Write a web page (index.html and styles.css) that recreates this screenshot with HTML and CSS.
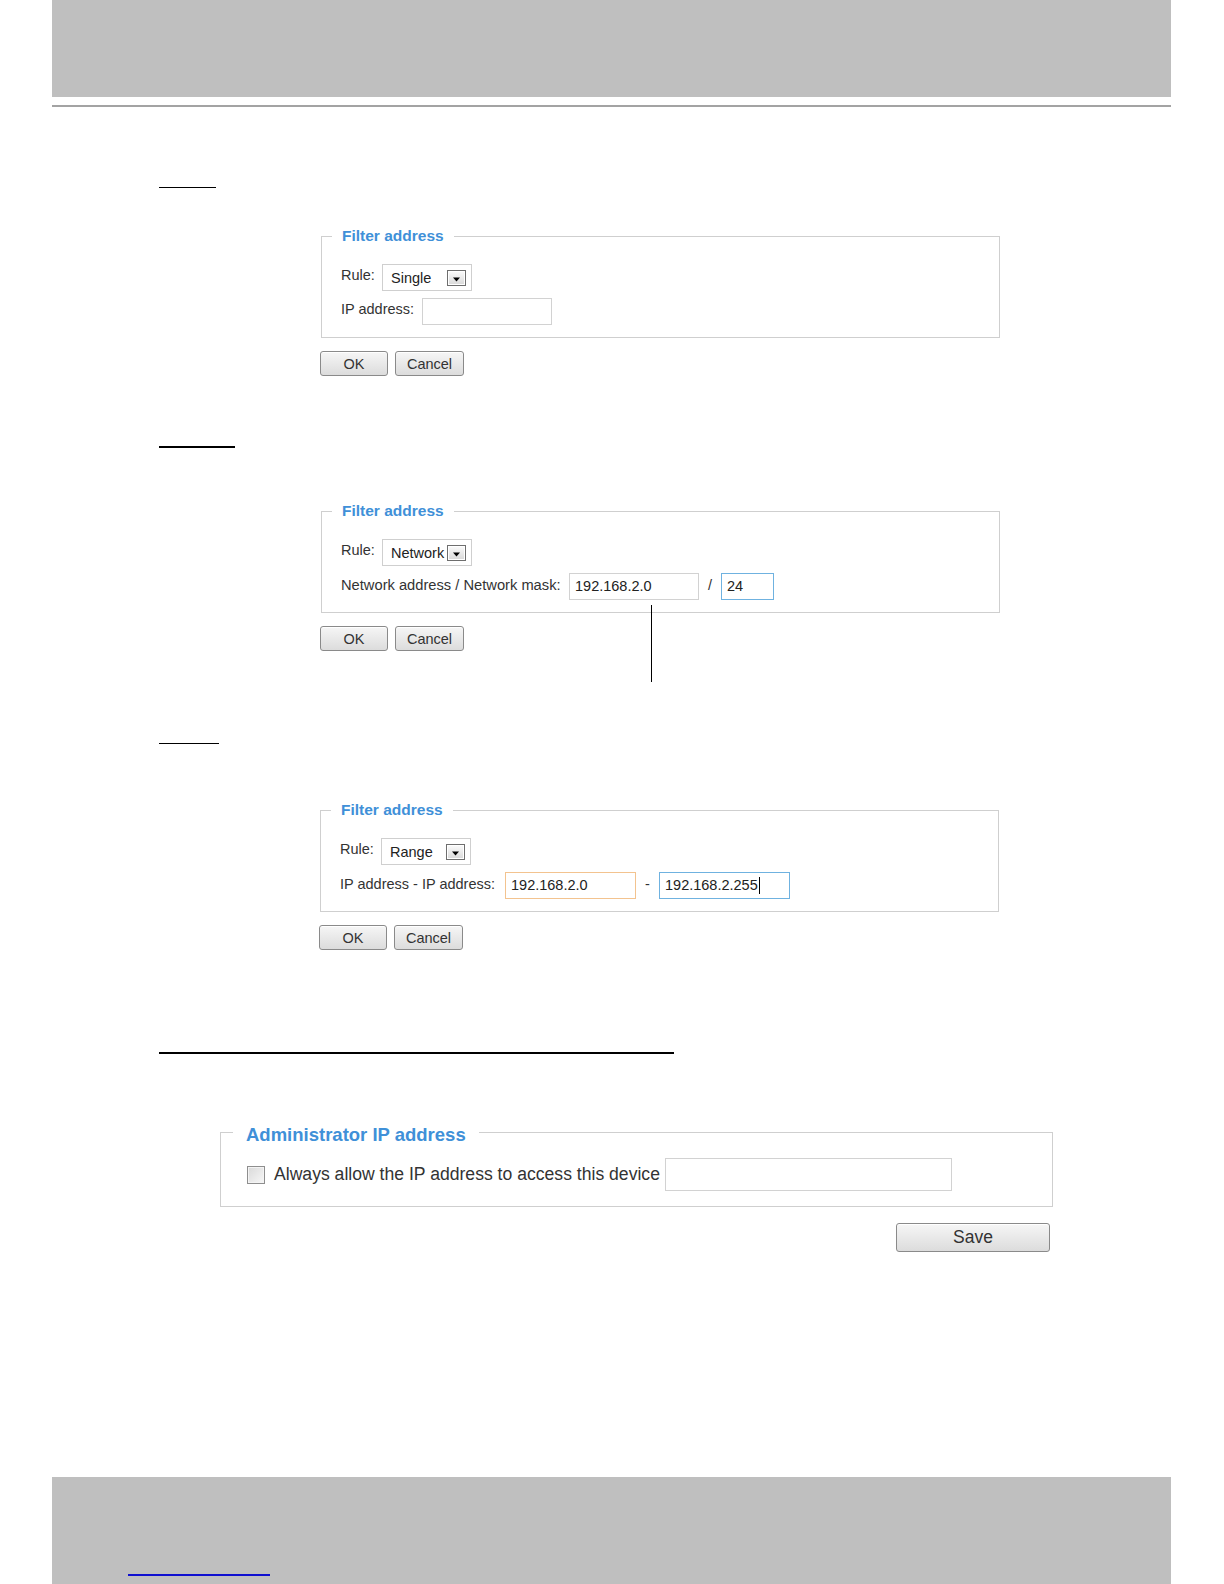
FILE: index.html
```html
<!DOCTYPE html>
<html lang="en">
<head>
<meta charset="utf-8">
<title>Filter address</title>
<link rel="stylesheet" href="styles.css">
</head>
<body>
<div class="page">
  <header class="top-band"></header>
  <div class="top-rule"></div>

  <main class="content">
    <div class="mark thin mark-1"></div>
    <div class="panel panel-1">
      <fieldset class="filter">
        <legend>Filter address</legend>
        <div class="row">
          <span class="label rule-label">Rule:</span>
          <div class="select"><span class="select-text">Single</span><span class="drop"><svg width="9" height="5" viewBox="0 0 9 5"><path d="M1 0.5h7L4.5 4.5z" fill="#000"/></svg></span></div>
        </div>
        <div class="row">
          <span class="label lw-ip">IP address:</span>
          <div class="field w130"></div>
        </div>
      </fieldset>
      <div class="actions">
        <button class="btn btn-ok" type="button">OK</button>
        <button class="btn btn-cancel" type="button">Cancel</button>
      </div>
    </div>

    <div class="mark mark-2"></div>
    <div class="panel panel-2">
      <fieldset class="filter">
        <legend>Filter address</legend>
        <div class="row">
          <span class="label rule-label">Rule:</span>
          <div class="select"><span class="select-text">Network</span><span class="drop"><svg width="9" height="5" viewBox="0 0 9 5"><path d="M1 0.5h7L4.5 4.5z" fill="#000"/></svg></span></div>
        </div>
        <div class="row">
          <span class="label lw-net">Network address / Network mask:</span>
          <div class="field w130">192.168.2.0</div>
          <span class="sep sep-slash">/</span>
          <div class="field w53 focus-blue">24</div>
        </div>
      </fieldset>
      <div class="actions">
        <button class="btn btn-ok" type="button">OK</button>
        <button class="btn btn-cancel" type="button">Cancel</button>
      </div>
      <div class="pointer-line"></div>
    </div>

    <div class="mark thin mark-3"></div>
    <div class="panel panel-3">
      <fieldset class="filter">
        <legend>Filter address</legend>
        <div class="row">
          <span class="label rule-label">Rule:</span>
          <div class="select"><span class="select-text">Range</span><span class="drop"><svg width="9" height="5" viewBox="0 0 9 5"><path d="M1 0.5h7L4.5 4.5z" fill="#000"/></svg></span></div>
        </div>
        <div class="row">
          <span class="label lw-range">IP address - IP address:</span>
          <div class="field w131 focus-orange">192.168.2.0</div>
          <span class="sep sep-dash">-</span>
          <div class="field w131 focus-blue">192.168.2.255<span class="caret"></span></div>
        </div>
      </fieldset>
      <div class="actions">
        <button class="btn btn-ok" type="button">OK</button>
        <button class="btn btn-cancel" type="button">Cancel</button>
      </div>
    </div>

    <div class="mark mark-4"></div>
    <div class="admin-block">
      <fieldset class="admin">
        <legend>Administrator IP address</legend>
        <div class="admin-row">
          <span class="checkbox"></span>
          <span class="admin-text">Always allow the IP address to access this device</span>
          <div class="field admin-field"></div>
        </div>
      </fieldset>
      <div class="save-row">
        <button class="btn btn-save" type="button">Save</button>
      </div>
    </div>
  </main>

  <footer class="bottom-band">
    <span class="footer-link"></span>
  </footer>
</div>
</body>
</html>
```

FILE: styles.css
```css
* {
  box-sizing: border-box;
}

html,
body {
  margin: 0;
  padding: 0;
  background: #ffffff;
}

body {
  font-family: "Liberation Sans", Arial, Helvetica, sans-serif;
  color: #333333;
}

.page {
  width: 1224px;
  min-height: 1584px;
  display: flex;
  flex-direction: column;
}

/* header band */
.top-band {
  margin-left: 52px;
  width: 1119px;
  height: 97px;
  background: #bfbfbf;
}

.top-rule {
  margin: 8px 0 0 52px;
  width: 1119px;
  height: 2px;
  background: #a3a3a3;
}

/* content */
.content {
  padding-left: 159px;
  display: flex;
  flex-direction: column;
  align-items: flex-start;
}

.mark {
  height: 2px;
  background: #000000;
}

.mark.thin {
  height: 1px;
}

.mark-1 {
  width: 57px;
  margin-top: 80px;
}

.mark-2 {
  width: 76px;
  margin-top: 70px;
}

.mark-3 {
  width: 60px;
  margin-top: 92px;
}

.mark-4 {
  width: 515px;
  margin-top: 102px;
}

.panel {
  position: relative;
  margin-left: 162px;
  width: 679px;
}

.panel-1 {
  margin-top: 39px;
}

.panel-2 {
  margin-top: 54px;
}

.panel-3 {
  margin-top: 57px;
  margin-left: 161px;
}

/* fieldset */
.filter {
  margin: 0;
  min-width: 0;
  border: 1px solid #cfcfcf;
  padding: 19px 10px 12px 10px;
  display: flex;
  flex-direction: column;
  gap: 7px;
}

.filter legend {
  padding: 0 10px;
  font-size: 15.5px;
  line-height: 18px;
  font-weight: bold;
  color: #4090d8;
}

.row {
  display: flex;
  align-items: center;
  height: 27px;
  margin-left: 9px;
}

.label {
  font-size: 14.5px;
  line-height: 16px;
  color: #333333;
  white-space: nowrap;
  flex: none;
  margin-bottom: 4px;
}

.rule-label {
  width: 41px;
  margin-bottom: 6px;
}

.lw-ip {
  width: 81px;
  margin-bottom: 5px;
}

.lw-net {
  width: 228px;
  font-size: 14.7px;
}

.lw-range {
  width: 165px;
  margin-bottom: 3px;
}

/* select */
.select {
  width: 90px;
  height: 27px;
  border: 1px solid #cfcfcf;
  background: #ffffff;
  display: flex;
  justify-content: space-between;
  align-items: flex-start;
  padding-left: 8px;
}

.select-text {
  margin-top: 5px;
  font-size: 14.5px;
  line-height: 16px;
  color: #222222;
  white-space: nowrap;
}

.drop {
  flex: none;
  margin-top: 5px;
  margin-right: 5px;
  width: 19px;
  height: 16px;
  border: 1px solid #6e6e6e;
  background: linear-gradient(#fbfbfb, #d8d8d8);
  box-shadow: inset 0 0 0 1px #ffffff;
  display: flex;
  align-items: flex-end;
  justify-content: center;
  padding-bottom: 3px;
}

.drop svg {
  display: block;
}

/* text fields */
.field {
  height: 27px;
  border: 1px solid #d2d2d2;
  background: #ffffff;
  padding-left: 5px;
  font-size: 14.5px;
  line-height: 25px;
  color: #222222;
  white-space: nowrap;
  display: flex;
  align-items: center;
}

.w130 {
  width: 130px;
}

.w131 {
  width: 131px;
}

.w53 {
  width: 53px;
}

.focus-blue {
  border-color: #6fb2e0;
}

.focus-orange {
  border-color: #f3c38f;
}

.sep {
  font-size: 14.5px;
  line-height: 16px;
  color: #333333;
  text-align: center;
  flex: none;
  margin-bottom: 4px;
}

.sep-slash {
  width: 22px;
}

.sep-dash {
  width: 23px;
}

.caret {
  display: inline-block;
  width: 1px;
  height: 17px;
  background: #000000;
  margin-left: 1px;
}

/* buttons */
.actions {
  display: flex;
  gap: 7px;
  margin-top: 13px;
  margin-left: -1px;
}

.btn {
  font-family: "Liberation Sans", Arial, Helvetica, sans-serif;
  font-size: 14.5px;
  color: #333333;
  height: 25px;
  padding: 0;
  border: 1px solid #8a8a8a;
  border-radius: 3px;
  background: linear-gradient(#f6f6f6, #dcdcdc);
  box-shadow: inset 0 1px 0 #ffffff;
  cursor: default;
}

.btn-ok {
  width: 68px;
}

.btn-cancel {
  width: 69px;
}

.pointer-line {
  position: absolute;
  left: 330px;
  top: 103px;
  width: 1px;
  height: 77px;
  background: #000000;
}

/* admin block */
.admin-block {
  margin-top: 64px;
  margin-left: 61px;
  width: 833px;
}

.admin {
  margin: 0;
  min-width: 0;
  border: 1px solid #cfcfcf;
  padding: 12px 12px 15px 12px;
}

.admin legend {
  padding: 6px 13px 0 13px;
  font-size: 18.5px;
  line-height: 22px;
  font-weight: bold;
  color: #4090d8;
}

.admin-row {
  display: flex;
  align-items: center;
  height: 33px;
  margin-left: 14px;
}

.checkbox {
  flex: none;
  width: 18px;
  height: 18px;
  border: 1px solid #8e8e8e;
  background: linear-gradient(135deg, #d9d9d9, #f7f7f7);
  box-shadow: inset 0 0 0 1px #f4f4f4;
}

.admin-text {
  margin-left: 9px;
  font-size: 17.6px;
  color: #333333;
  white-space: nowrap;
}

.admin-field {
  margin-left: 5px;
  width: 287px;
  height: 33px;
}

.save-row {
  display: flex;
  justify-content: flex-end;
  margin-top: 16px;
  padding-right: 3px;
}

.btn-save {
  width: 154px;
  height: 29px;
  font-size: 17.5px;
}

/* footer band */
.bottom-band {
  margin-top: auto;
  margin-left: 52px;
  width: 1119px;
  height: 107px;
  background: #bfbfbf;
  padding: 97px 0 0 76px;
}

.footer-link {
  display: block;
  width: 142px;
  height: 2px;
  background: #1010d0;
}
```
